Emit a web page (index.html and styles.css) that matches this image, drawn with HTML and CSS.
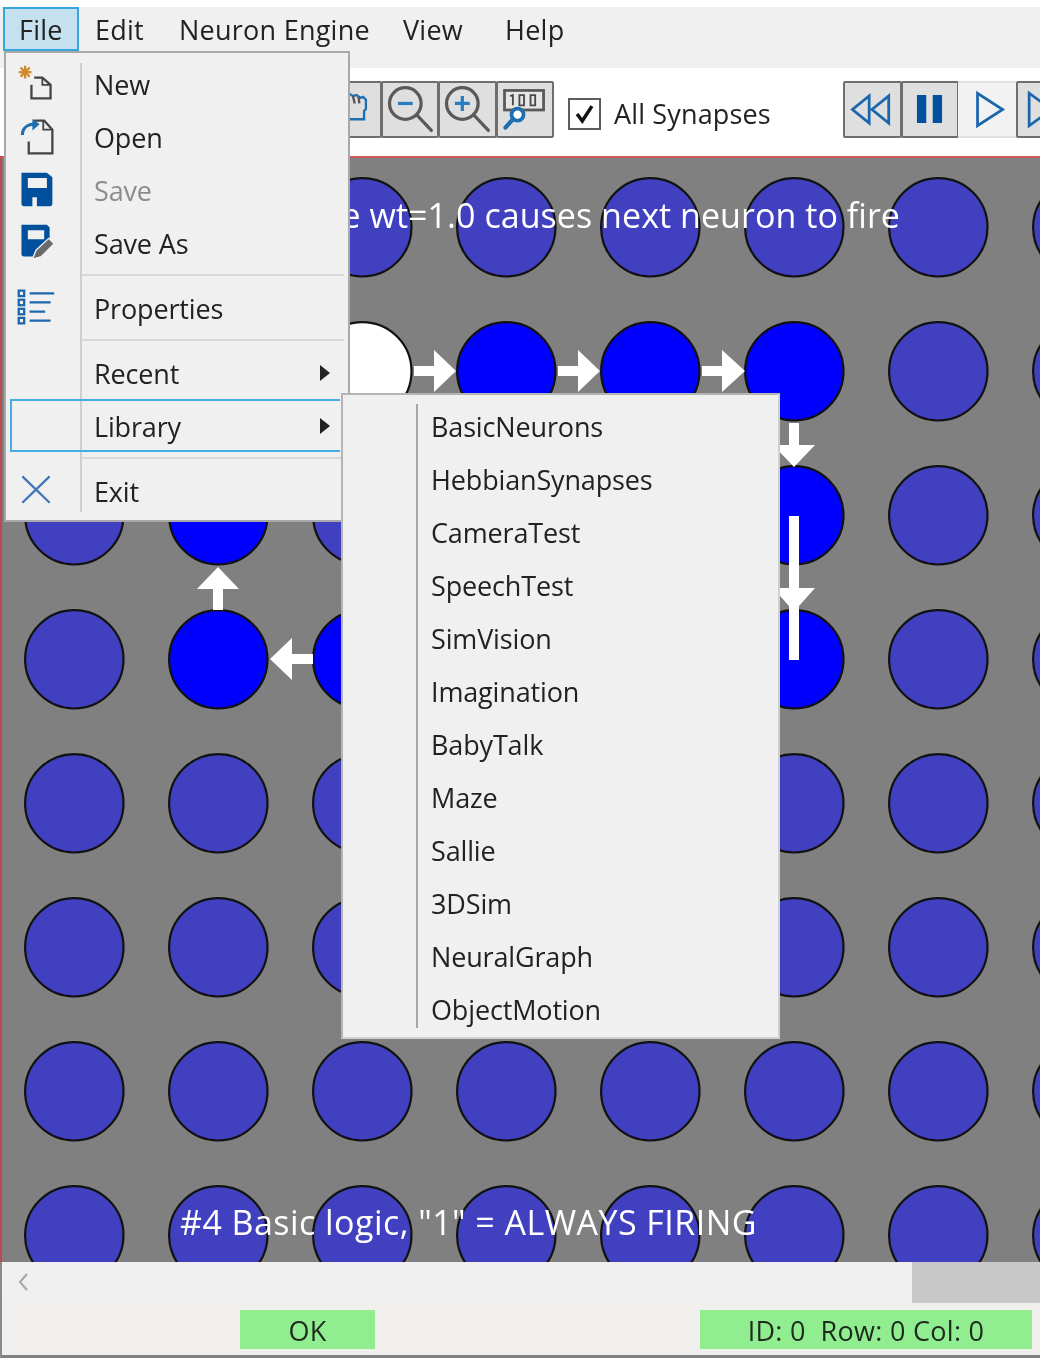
FILE: index.html
```html
<!DOCTYPE html>
<html lang="en">
<head>
<meta charset="utf-8">
<title>Neuron Engine</title>
<link rel="stylesheet" href="styles.css">
</head>
<body>
<div class="app">
  <div class="topstrip"></div>
  <nav class="menubar">
    <div class="menu-title open">File</div>
    <div class="menu-title">Edit</div>
    <div class="menu-title">Neuron Engine</div>
    <div class="menu-title">View</div>
    <div class="menu-title">Help</div>
  </nav>
  <div class="toolbar">
    <div class="tool-group">
      <div class="tool"><svg viewBox="0 0 57 57" class="ico"><path d="M24 14v-1l3-1 3 2 4-1 4 3 3-1 3 3v10l-2 2v9H20v-3" fill="none" stroke="#1f6fb0" stroke-width="2.5"/><path d="M30 14l2 8M36 15l1 7" stroke="#555" stroke-width="2.5"/></svg></div>
      <div class="tool"><svg viewBox="0 0 57 57" class="ico"><circle cx="24" cy="22" r="17" fill="none" stroke="#5a5a5a" stroke-width="3.5"/><path d="M36 34l16 17" stroke="#5a5a5a" stroke-width="3.5" stroke-linecap="round"/><path d="M16 22h16" stroke="#2a7cc0" stroke-width="3.5"/></svg></div>
      <div class="tool"><svg viewBox="0 0 57 57" class="ico"><circle cx="24" cy="22" r="17" fill="none" stroke="#5a5a5a" stroke-width="3.5"/><path d="M36 34l16 17" stroke="#5a5a5a" stroke-width="3.5" stroke-linecap="round"/><path d="M16 22h16M24 14v16" stroke="#2a7cc0" stroke-width="3.5"/></svg></div>
      <div class="tool"><svg viewBox="0 0 57 57" class="ico"><rect x="7" y="8" width="42" height="21" fill="#e6e6e6" stroke="#5a5a5a" stroke-width="3"/><path d="M13 14l3-1v11M23 13h5v11h-5zM35 13h5v11h-5z" fill="none" stroke="#4a4a4a" stroke-width="2"/><circle cx="21" cy="34" r="6.5" fill="#fff" stroke="#1f6fb0" stroke-width="4"/><path d="M16 39l-8 9" stroke="#1f6fb0" stroke-width="4.5" stroke-linecap="round"/></svg></div>
    </div>
    <label class="synapses"><span class="checkbox"><svg viewBox="0 0 33 32"><path d="M8 16l6 8L25 7" fill="none" stroke="#111" stroke-width="4"/></svg></span><span>All Synapses</span></label>
    <div class="tool-group transport">
      <div class="tool"><svg viewBox="0 0 57 57" class="ico"><path d="M26 14v29L8 28.500zM47 14v29L29 28.500z" fill="none" stroke="#1c66ad" stroke-width="3"/></svg></div>
      <div class="tool"><svg viewBox="0 0 57 57" class="ico"><path d="M15 13h10v30H15zM32 13h10v30H32z" fill="#00509d"/></svg></div>
      <div class="tool idle"><svg viewBox="0 0 57 57" class="ico"><path d="M21 11v35l27-17.500z" fill="none" stroke="#1c66ad" stroke-width="3"/></svg></div>
      <div class="tool"><svg viewBox="0 0 57 57" class="ico"><path d="M12 11v35l24-17.500z" fill="none" stroke="#1c66ad" stroke-width="3"/></svg></div>
    </div>
  </div>
  <main class="canvas">
    <svg class="grid" viewBox="2 158 1038 1104">
      <g class="n">
        <circle cx="74" cy="227" r="49"/><circle cx="218" cy="227" r="49"/><circle cx="362" cy="227" r="49"/><circle cx="506" cy="227" r="49"/><circle cx="650" cy="227" r="49"/><circle cx="794" cy="227" r="49"/><circle cx="938" cy="227" r="49"/><circle cx="1082" cy="227" r="49"/>
        <circle cx="74" cy="371" r="49"/><circle cx="218" cy="371" r="49"/><circle cx="938" cy="371" r="49"/><circle cx="1082" cy="371" r="49"/>
        <circle cx="74" cy="515" r="49"/><circle cx="362" cy="515" r="49"/><circle cx="506" cy="515" r="49"/><circle cx="650" cy="515" r="49"/><circle cx="938" cy="515" r="49"/><circle cx="1082" cy="515" r="49"/>
        <circle cx="74" cy="659" r="49"/><circle cx="506" cy="659" r="49"/><circle cx="650" cy="659" r="49"/><circle cx="938" cy="659" r="49"/><circle cx="1082" cy="659" r="49"/>
        <circle cx="74" cy="803" r="49"/><circle cx="218" cy="803" r="49"/><circle cx="362" cy="803" r="49"/><circle cx="506" cy="803" r="49"/><circle cx="650" cy="803" r="49"/><circle cx="794" cy="803" r="49"/><circle cx="938" cy="803" r="49"/><circle cx="1082" cy="803" r="49"/>
        <circle cx="74" cy="947" r="49"/><circle cx="218" cy="947" r="49"/><circle cx="362" cy="947" r="49"/><circle cx="506" cy="947" r="49"/><circle cx="650" cy="947" r="49"/><circle cx="794" cy="947" r="49"/><circle cx="938" cy="947" r="49"/><circle cx="1082" cy="947" r="49"/>
        <circle cx="74" cy="1091" r="49"/><circle cx="218" cy="1091" r="49"/><circle cx="362" cy="1091" r="49"/><circle cx="506" cy="1091" r="49"/><circle cx="650" cy="1091" r="49"/><circle cx="794" cy="1091" r="49"/><circle cx="938" cy="1091" r="49"/><circle cx="1082" cy="1091" r="49"/>
        <circle cx="74" cy="1235" r="49"/><circle cx="218" cy="1235" r="49"/><circle cx="362" cy="1235" r="49"/><circle cx="506" cy="1235" r="49"/><circle cx="650" cy="1235" r="49"/><circle cx="794" cy="1235" r="49"/><circle cx="938" cy="1235" r="49"/><circle cx="1082" cy="1235" r="49"/>
      </g>
      <g class="f">
        <circle cx="506" cy="371" r="49"/><circle cx="650" cy="371" r="49"/><circle cx="794" cy="371" r="49"/>
        <circle cx="218" cy="515" r="49"/><circle cx="794" cy="515" r="49"/>
        <circle cx="218" cy="659" r="49"/><circle cx="362" cy="659" r="49"/><circle cx="794" cy="659" r="49"/>
      </g>
      <circle class="w" cx="362" cy="371" r="49"/>
      <g class="arrows">
        <path d="M414 366h20v-16l22 21-22 21v-16h-20z"/>
        <path d="M558 366h20v-16l22 21-22 21v-16h-20z"/>
        <path d="M702 366h20v-16l23 21-23 21v-16h-20z"/>
        <path d="M789 423h10v22h16l-21 22-21-22h16z"/>
        <path d="M789 516h10v72h16l-16 18v54h-10v-54l-16-18h16z"/>
        <path d="M213 610v-21h-16l21-22 21 22h-16v21z"/>
        <path d="M313 654h-21v-16l-22 21 22 21v-16h21z"/>
      </g>
    </svg>
    <p class="caption caption-top">e wt=1.0 causes next neuron to fire</p>
    <p class="caption caption-bottom">#4 Basic logic, "1" = ALWAYS FIRING</p>
  </main>
  <div class="scrollbar">
    <svg class="scroll-arrow" viewBox="0 0 12 18"><path d="M10 1L3 9l7 8" fill="none" stroke="#a6a6a6" stroke-width="2"/></svg>
    <div class="scroll-thumb"></div>
  </div>
  <footer class="status">
    <div class="badge badge-ok">OK</div>
    <div class="badge badge-id">ID: 0&nbsp; Row: 0 Col: 0</div>
  </footer>

  <div class="popup file-menu">
    <div class="rail"></div>
    <div class="item"><svg viewBox="0 0 44 44" class="item-ico"><path d="M10 3v14M3 10h14M5 5l10 10M15 5L5 15" stroke="#d08a2c" stroke-width="2.500"/><path d="M20 16h9l9 8v15H17V24" fill="none" stroke="#444" stroke-width="2.500"/><path d="M29 16v8h9" fill="none" stroke="#444" stroke-width="2"/></svg><span>New</span></div>
    <div class="item"><svg viewBox="0 0 44 44" class="item-ico"><path d="M20 5h11l9 10v26H14V28" fill="none" stroke="#444" stroke-width="2.500"/><path d="M30 5v10h10" fill="none" stroke="#444" stroke-width="2"/><path d="M7 21c0-8 6-12 14-12" fill="none" stroke="#1f6fb0" stroke-width="3.500"/><path d="M18 3l8 6-8 7z" fill="#1f6fb0"/></svg><span>Open</span></div>
    <div class="item disabled"><svg viewBox="0 0 44 44" class="item-ico"><path fill-rule="evenodd" d="M6 4h28l6 5v29a3 3 0 0 1-3 3H9a3 3 0 0 1-3-3zM13 10v11h21V10zM18 31v10h5V31z" fill="#00509d"/></svg><span>Save</span></div>
    <div class="item"><svg viewBox="0 0 44 44" class="item-ico"><path fill-rule="evenodd" d="M6 3h28l3 3v16L22 38H9a3 3 0 0 1-3-3zM13 9v10h18V9z" fill="#00509d"/><path d="M18 41l4-10 14-13 6 6-14 14z" fill="#6a6a6a" stroke="#f0f0f0" stroke-width="1.500"/></svg><span>Save As</span></div>
    <div class="sep"></div>
    <div class="item"><svg viewBox="0 0 44 44" class="item-ico"><g fill="none" stroke="#1c66ad" stroke-width="2.500"><rect x="3" y="4" width="6" height="6"/><rect x="3" y="14" width="6" height="6"/><rect x="3" y="24" width="6" height="6"/><rect x="3" y="34" width="6" height="6"/><path d="M15 7h27M15 17h23M15 27h17M15 37h23"/></g></svg><span>Properties</span></div>
    <div class="sep"></div>
    <div class="item"><span>Recent</span><i class="caret"></i></div>
    <div class="item active"><span>Library</span><i class="caret"></i></div>
    <div class="sep"></div>
    <div class="item"><svg viewBox="0 0 44 44" class="item-ico"><path d="M7 7l30 29M37 7L7 36" stroke="#3f74b8" stroke-width="2.500"/></svg><span>Exit</span></div>
  </div>

  <div class="popup library-menu">
    <div class="rail"></div>
    <div class="item"><span>BasicNeurons</span></div>
    <div class="item"><span>HebbianSynapses</span></div>
    <div class="item"><span>CameraTest</span></div>
    <div class="item"><span>SpeechTest</span></div>
    <div class="item"><span>SimVision</span></div>
    <div class="item"><span>Imagination</span></div>
    <div class="item"><span>BabyTalk</span></div>
    <div class="item"><span>Maze</span></div>
    <div class="item"><span>Sallie</span></div>
    <div class="item"><span>3DSim</span></div>
    <div class="item"><span>NeuralGraph</span></div>
    <div class="item"><span>ObjectMotion</span></div>
  </div>
</div>
</body>
</html>
```
FILE: styles.css
```css
* { box-sizing: border-box; }
html, body { margin: 0; padding: 0; }
body { width: 1040px; height: 1360px; overflow: hidden; background: #fff; }
.app {
  position: relative;
  width: 1040px;
  height: 1360px;
  overflow: hidden;
  display: flex;
  flex-direction: column;
  font-family: "Open Sans", "Noto Sans", sans-serif;
  font-size: 27px;
  letter-spacing: -0.15px;
  color: #222;
  background: #fff;
  filter: blur(0.6px);
}
.topstrip { height: 7px; flex: none; background: #fff; }
.menubar {
  height: 61px;
  flex: none;
  background: #f0f0f0;
  padding-left: 3px;
  display: grid;
  grid-template-columns: 76px 84px 224px 102px 100px;
  grid-template-rows: 44px;
  letter-spacing: 0.25px;
}
.menu-title { padding: 1px 0 0 16px; line-height: 44px; white-space: nowrap; }
.menu-title.open { background: #c5e0ef; border: 2px solid #35a5dc; padding: 1px 0 0 14px; line-height: 40px; }

.toolbar {
  height: 88px;
  flex: none;
  background: #fff;
  display: flex;
  align-items: flex-start;
  padding: 13px 0 0 324px;
  white-space: nowrap;
}
.tool-group { display: flex; flex: none; }
.tool {
  width: 58.500px;
  height: 57px;
  flex: none;
  background: #dfdfdf;
  border: 2px solid #6e6e6e;
  margin-left: -1px;
  border-radius: 2px;
}
.tool.idle { background: #f2f2f2; border-color: #e0e0e0; border-left: 0; border-right: 0; }
.ico { display: block; width: 53px; height: 53px; }
.synapses { display: flex; align-items: center; gap: 13px; margin: 16px 0 0 14px; line-height: 33px; flex: none; width: 276px; letter-spacing: 0.15px; }
.checkbox { width: 33px; height: 32px; flex: none; border: 2px solid #5c5c5c; background: #fff; }
.checkbox svg { display: block; width: 29px; height: 28px; }

.canvas {
  position: relative;
  flex: none;
  height: 1106px;
  background: #808080;
  border-top: 2px solid #d0565a;
  border-left: 2px solid #b94a4e;
  overflow: hidden;
}
.grid { display: block; width: 1038px; height: 1104px; }
.grid circle { r: 49.200px; stroke: #111; stroke-width: 2.200; transform: translate(0.3px, 0.3px); }
.n circle { fill: #4040c0; }
.f circle { fill: #0000ff; }
.grid .w { fill: #fff; }
.arrows path { fill: #fff; }
.caption {
  position: absolute;
  margin: 0;
  color: #fff;
  font-size: 34px;
  line-height: 44px;
  white-space: nowrap;
}
.caption-top { top: 35px; right: 140px; letter-spacing: 0.05px; }
.caption-bottom { top: 1042px; left: 178px; letter-spacing: 0.45px; }

.scrollbar { position: relative; flex: none; height: 41px; background: #f0f0f0; border-left: 2px solid #8a8a8a; }
.scroll-arrow { position: absolute; left: 15px; top: 11px; width: 12px; height: 18px; }
.scroll-thumb { position: absolute; left: 910px; top: 0; right: 0; bottom: 0; background: #c8c8c8; }
.status {
  flex: none;
  height: 55px;
  background: #f1eeee;
  border-left: 2px solid #8a8a8a;
  border-bottom: 3px solid #808080;
  padding: 7px 8px 0 238px;
  display: flex;
  align-items: flex-start;
  justify-content: space-between;
  letter-spacing: 0.3px;
}
.badge { height: 39px; background: #90ee90; line-height: 41px; text-align: center; color: #1d2a1d; white-space: nowrap; }
.badge-ok { width: 135px; }
.badge-id { width: 332px; }

.popup {
  position: absolute;
  background: #f0f0f0;
  border: 2px solid #a8a8a8;
}
.rail { position: absolute; width: 2px; background: #c8c8c8; }
.file-menu { left: 4px; top: 51px; width: 346px; height: 471px; padding: 5px 2px 0 0; }
.file-menu .rail { left: 74px; top: 10px; bottom: 8px; background: #cfcfcf; }
.library-menu { left: 341px; top: 393px; width: 439px; height: 646px; padding-top: 5px; border-color: #b4b4b4; border-right-color: #d0d0d0; border-bottom-color: #d0d0d0; }
.library-menu .rail { left: 73px; top: 9px; bottom: 9px; background: #a6a6a6; }
.item { position: relative; height: 53px; line-height: 53px; white-space: nowrap; }
.file-menu .item { padding-left: 88px; }
.library-menu .item { padding-left: 88px; }
.item.disabled span { color: #8c8c8c; }
.item.active::after {
  content: "";
  position: absolute;
  left: 4px;
  right: 6px;
  top: -1px;
  bottom: 1px;
  border: 2px solid #45aee0;
  border-right: 0;
}
.item-ico { position: absolute; left: 10px; top: 5px; width: 40px; height: 40px; }
.caret {
  position: absolute;
  left: 314px;
  top: 18px;
  border-left: 10px solid #222;
  border-top: 8px solid transparent;
  border-bottom: 8px solid transparent;
}
.sep { height: 12px; padding-top: 4px; margin-left: 76px; }
.sep::before { content: ""; display: block; height: 2px; background: #d8d8d8; margin-right: 2px; }
```
